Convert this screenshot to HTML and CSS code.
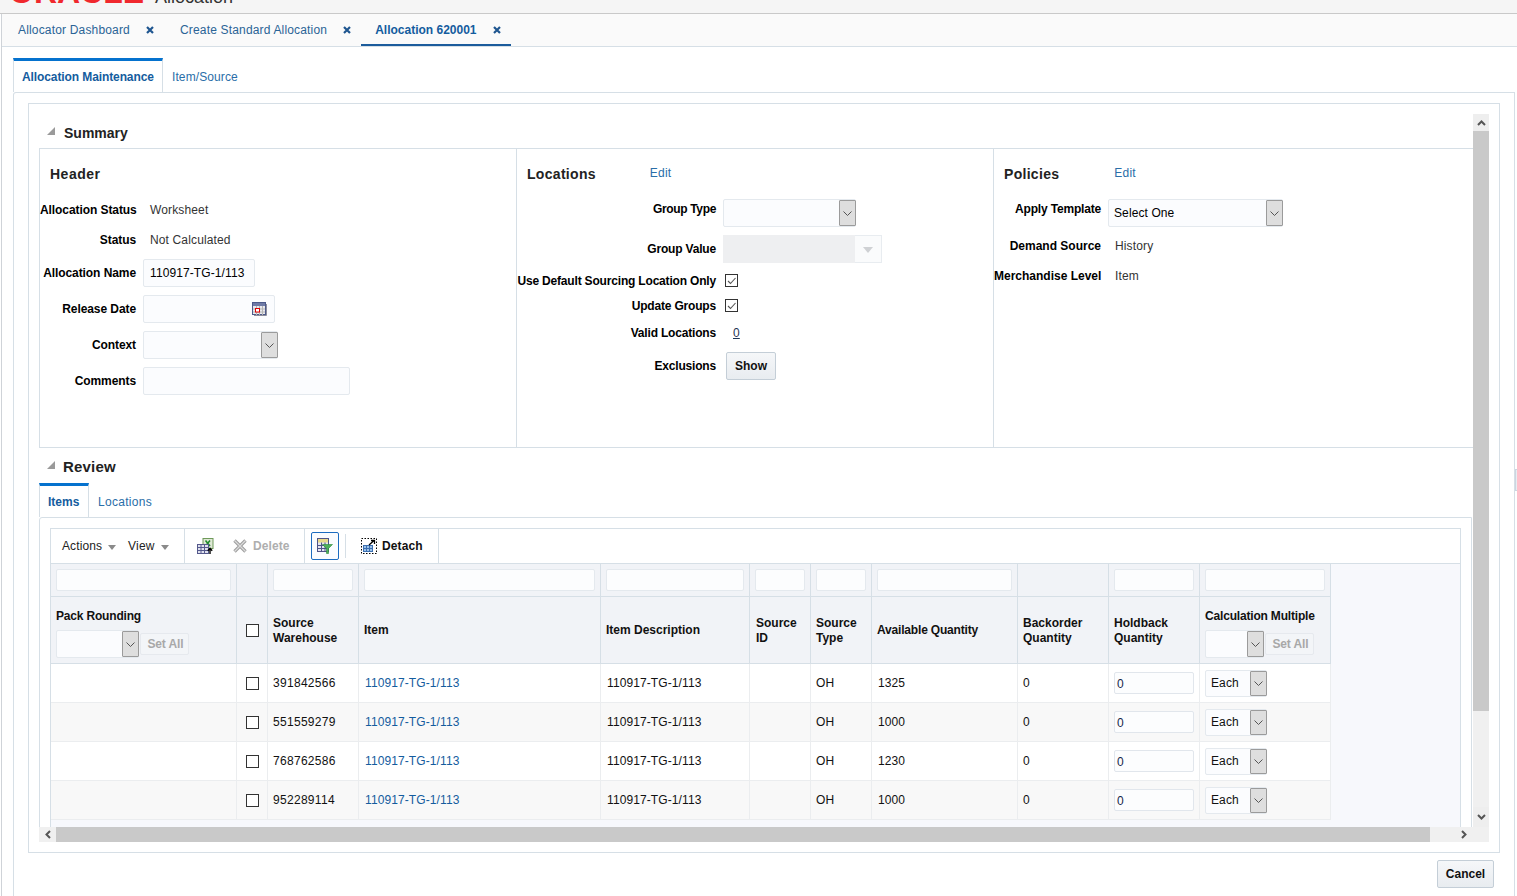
FILE: index.html
```html
<!DOCTYPE html>
<html lang="en">
<head>
<meta charset="utf-8">
<title>Allocation 620001</title>
<link rel="stylesheet" href="styles.css">
</head>
<body>
<svg class="defs" width="0" height="0" aria-hidden="true">
  <defs>
    <symbol id="chev" viewBox="0 0 9 5"><polyline points="0.5,0.5 4.5,4.5 8.5,0.5" fill="none" stroke="#555" stroke-width="1"/></symbol>
    <symbol id="close" viewBox="0 0 8 8"><path d="M1 1L7 7M7 1L1 7" stroke="#1f5690" stroke-width="2.2" fill="none"/></symbol>
    <symbol id="collapse" viewBox="0 0 8 8"><polygon points="0,8 8,8 8,0" fill="#9a9a9a"/></symbol>
    <symbol id="check" viewBox="0 0 14 14"><rect x="0.5" y="0.5" width="12" height="12" fill="#fff" stroke="#333"/><polyline points="3,7 5.5,9.5 10.5,4" fill="none" stroke="#555" stroke-width="1.1"/></symbol>
  </defs>
</svg>

<div class="topbar">
  <span class="logo">ORACLE</span>
  <span class="app-name">Allocation</span>
</div>

<div class="shell">
  <nav class="tabbar">
    <div class="doc-tab"><span>Allocator Dashboard</span><svg class="x"><use href="#close"/></svg></div>
    <div class="doc-tab"><span>Create Standard Allocation</span><svg class="x"><use href="#close"/></svg></div>
    <div class="doc-tab doc-tab-on"><span>Allocation 620001</span><svg class="x"><use href="#close"/></svg></div>
  </nav>

  <div class="page">
    <div class="tabs">
      <div class="tab tab-on tab-main">Allocation Maintenance</div>
      <div class="tab">Item/Source</div>
    </div>

    <div class="panel">
      <div class="inner">
        <div class="frame">
          <div class="viewport">
            <div class="sec-head sec-summary">
              <svg class="tri"><use href="#collapse"/></svg><h2>Summary</h2>
            </div>

            <div class="summary">
              <section class="col col-header">
                <div class="col-head"><h3>Header</h3></div>
                <div class="row"><label>Allocation Status</label><span class="val">Worksheet</span></div>
                <div class="row"><label>Status</label><span class="val">Not Calculated</span></div>
                <div class="row row-f"><label>Allocation Name</label><div class="inp inp-name">110917-TG-1/113</div></div>
                <div class="row row-f"><label>Release Date</label>
                  <div class="inp inp-date">
                    <svg class="cal" viewBox="0 0 15 14" width="15" height="14">
                      <rect x="0.5" y="0.5" width="13" height="12" fill="#e9e9ee" stroke="#4d5a8a"/>
                      <rect x="1" y="1" width="12" height="3" fill="#6f7ba6"/>
                      <path d="M1 7H13M1 10H13M4.5 4V13M7.5 4V13M10.5 4V13" stroke="#b5b5b5" stroke-width="1"/>
                      <rect x="3.5" y="6.5" width="4" height="3.5" fill="#fff" stroke="#e00000"/>
                      <path d="M14.5 2V13.5H2" stroke="#8d8d9c" fill="none"/>
                    </svg>
                  </div>
                </div>
                <div class="row row-f"><label>Context</label>
                  <div class="select sel-context"><span class="sel-text"></span><span class="sel-btn"><svg class="chev"><use href="#chev"/></svg></span></div>
                </div>
                <div class="row row-f"><label>Comments</label><div class="inp inp-comments"></div></div>
              </section>

              <section class="col col-loc">
                <div class="col-head"><h3>Locations</h3><a class="edit">Edit</a></div>
                <div class="row row-f"><label class="up">Group Type</label>
                  <div class="select sel-group"><span class="sel-text"></span><span class="sel-btn"><svg class="chev"><use href="#chev"/></svg></span></div>
                </div>
                <div class="row row-f"><label>Group Value</label>
                  <div class="select-off"><span class="off-text"></span><span class="off-btn"></span></div>
                </div>
                <div class="row row-a"><label>Use Default Sourcing Location Only</label><svg class="cb cb-on"><use href="#check"/></svg></div>
                <div class="row row-b"><label>Update Groups</label><svg class="cb cb-on"><use href="#check"/></svg></div>
                <div class="row row-c"><label>Valid Locations</label><a class="zero">0</a></div>
                <div class="row row-d"><label>Exclusions</label><button class="btn btn-show">Show</button></div>
              </section>

              <section class="col col-pol">
                <div class="col-head"><h3>Policies</h3><a class="edit">Edit</a></div>
                <div class="row row-f"><label class="up">Apply Template</label>
                  <div class="select sel-template"><span class="sel-text">Select One</span><span class="sel-btn"><svg class="chev"><use href="#chev"/></svg></span></div>
                </div>
                <div class="row"><label>Demand Source</label><span class="val">History</span></div>
                <div class="row"><label>Merchandise Level</label><span class="val">Item</span></div>
              </section>
            </div>

            <div class="sec-head sec-review">
              <svg class="tri"><use href="#collapse"/></svg><h2 class="h-review">Review</h2>
            </div>

            <div class="tabs">
              <div class="tab tab-on tab-items">Items</div>
              <div class="tab tab-loc">Locations</div>
            </div>

            <div class="review-panel">
              <div class="table-box">
                <div class="toolbar">
                  <div class="tb-group tb-menus">
                    <span>Actions</span><i class="caret"></i>
                    <span class="tb-view">View</span><i class="caret"></i>
                  </div>
                  <div class="tb-group tb-actions">
                    <svg class="ic" viewBox="0 0 17 17" width="17" height="17">
                      <rect x="6" y="0.5" width="10" height="10" fill="#dfe8d6" stroke="#6f9a5a"/>
                      <path d="M8.5 2.5L13 8M13 2.5L8.5 8" stroke="#1f8a2c" stroke-width="1.6"/>
                      <rect x="0.5" y="6.5" width="11" height="9" fill="#dfe1ee" stroke="#55598c"/>
                      <path d="M0.5 9.5H11M0.5 12.5H11M4 6.5V15M7.5 6.5V15" stroke="#55598c" stroke-width="1"/>
                      <path d="M13 16V11M10.8 12.8L13 10.4L15.2 12.8" stroke="#000" stroke-width="1.4" fill="none"/>
                    </svg>
                    <span class="tb-del">
                      <svg class="ic" viewBox="0 0 14 14" width="14" height="14"><path d="M1.5 1.5L12.5 12.5M12.5 1.5L1.5 12.5" stroke="#a0a0a0" stroke-width="3.4"/><path d="M1.5 1.5L12.5 12.5M12.5 1.5L1.5 12.5" stroke="#dcdcdc" stroke-width="1.2"/></svg>
                      <b>Delete</b>
                    </span>
                  </div>
                  <div class="tb-group tb-filter">
                    <span class="filter-btn">
                      <svg class="ic" viewBox="0 0 16 16" width="16" height="16">
                        <rect x="0.5" y="0.5" width="11" height="13" fill="#e5e5f0" stroke="#4f5488"/>
                        <rect x="1" y="1" width="10" height="3.5" fill="#e8d98a"/>
                        <path d="M1 7.5H11M1 10.5H11M4.5 4.5V13.5M8 4.5V13.5" stroke="#4f5488" stroke-width="1"/>
                        <polygon points="5.5,6.5 15.5,6.5 11.5,10.5 11.5,15.5 9.5,15.5 9.5,10.5" fill="#4fb05a" stroke="#2b8a3a" stroke-width="0.6"/>
                      </svg>
                    </span>
                  </div>
                  <div class="tb-group tb-detach">
                    <svg class="ic" viewBox="0 0 16 16" width="16" height="16">
                      <rect x="0.5" y="0.5" width="15" height="15" fill="#fff" stroke="#000" stroke-dasharray="1.5 1.5"/>
                      <rect x="2.5" y="7.5" width="9" height="6" fill="#9cc2ea" stroke="#3c6fb0"/>
                      <path d="M2.5 10.5H11.5M5.5 7.5V13.5M8.5 7.5V13.5" stroke="#3c6fb0" stroke-width="1"/>
                      <path d="M8 7L13 2.5M10 2.5H13.5V6" stroke="#000" stroke-width="1.3" fill="none"/>
                    </svg>
                    <b>Detach</b>
                  </div>
                </div>

                <table class="grid">
                  <colgroup>
                    <col class="c1"><col class="c2"><col class="c3"><col class="c4"><col class="c5"><col class="c6"><col class="c7"><col class="c8"><col class="c9"><col class="c10"><col class="c11">
                  </colgroup>
                  <thead>
                    <tr class="filter-row">
                      <th><div class="qbe"></div></th>
                      <th></th>
                      <th><div class="qbe"></div></th>
                      <th><div class="qbe"></div></th>
                      <th><div class="qbe"></div></th>
                      <th><div class="qbe"></div></th>
                      <th><div class="qbe"></div></th>
                      <th><div class="qbe"></div></th>
                      <th></th>
                      <th><div class="qbe"></div></th>
                      <th><div class="qbe"></div></th>
                    </tr>
                    <tr class="head-row">
                      <th>
                        <div class="th-title">Pack Rounding</div>
                        <div class="th-tools">
                          <div class="select sel-pack"><span class="sel-text"></span><span class="sel-btn"><svg class="chev"><use href="#chev"/></svg></span></div>
                          <span class="setall">Set All</span>
                        </div>
                      </th>
                      <th class="cb-cell"><span class="box"></span></th>
                      <th class="two">Source<br>Warehouse</th>
                      <th>Item</th>
                      <th>Item Description</th>
                      <th class="two th-id">Source<br>ID</th>
                      <th class="two">Source<br>Type</th>
                      <th class="tight">Available Quantity</th>
                      <th class="two">Backorder<br>Quantity</th>
                      <th class="two">Holdback<br>Quantity</th>
                      <th>
                        <div class="th-title">Calculation Multiple</div>
                        <div class="th-tools">
                          <div class="select sel-calc"><span class="sel-text"></span><span class="sel-btn"><svg class="chev"><use href="#chev"/></svg></span></div>
                          <span class="setall">Set All</span>
                        </div>
                      </th>
                    </tr>
                  </thead>
                  <tbody>
                    <tr>
                      <td></td><td class="cb-cell"><span class="box"></span></td><td>391842566</td><td><a class="link">110917-TG-1/113</a></td><td>110917-TG-1/113</td><td></td><td>OH</td><td>1325</td><td>0</td>
                      <td><div class="qty">0</div></td>
                      <td><div class="select sel-each"><span class="sel-text">Each</span><span class="sel-btn"><svg class="chev"><use href="#chev"/></svg></span></div></td>
                    </tr>
                    <tr class="alt">
                      <td></td><td class="cb-cell"><span class="box"></span></td><td>551559279</td><td><a class="link">110917-TG-1/113</a></td><td>110917-TG-1/113</td><td></td><td>OH</td><td>1000</td><td>0</td>
                      <td><div class="qty">0</div></td>
                      <td><div class="select sel-each"><span class="sel-text">Each</span><span class="sel-btn"><svg class="chev"><use href="#chev"/></svg></span></div></td>
                    </tr>
                    <tr>
                      <td></td><td class="cb-cell"><span class="box"></span></td><td>768762586</td><td><a class="link">110917-TG-1/113</a></td><td>110917-TG-1/113</td><td></td><td>OH</td><td>1230</td><td>0</td>
                      <td><div class="qty">0</div></td>
                      <td><div class="select sel-each"><span class="sel-text">Each</span><span class="sel-btn"><svg class="chev"><use href="#chev"/></svg></span></div></td>
                    </tr>
                    <tr class="alt">
                      <td></td><td class="cb-cell"><span class="box"></span></td><td>952289114</td><td><a class="link">110917-TG-1/113</a></td><td>110917-TG-1/113</td><td></td><td>OH</td><td>1000</td><td>0</td>
                      <td><div class="qty">0</div></td>
                      <td><div class="select sel-each"><span class="sel-text">Each</span><span class="sel-btn"><svg class="chev"><use href="#chev"/></svg></span></div></td>
                    </tr>
                  </tbody>
                </table>
              </div>
            </div>
          </div>

          <div class="vbar">
            <span class="sb-end"><svg viewBox="0 0 9 6" width="9" height="6"><polyline points="1,5 4.5,1.5 8,5" fill="none" stroke="#555" stroke-width="2"/></svg></span>
            <span class="v-thumb"></span>
            <span class="v-track"></span>
            <span class="sb-end sb-down"><svg viewBox="0 0 9 6" width="9" height="6"><polyline points="1,1 4.5,4.5 8,1" fill="none" stroke="#555" stroke-width="2"/></svg></span>
          </div>

          <div class="hbar">
            <span class="sb-left"><svg viewBox="0 0 6 9" width="6" height="9"><polyline points="5,1 1.5,4.5 5,8" fill="none" stroke="#555" stroke-width="2"/></svg></span>
            <span class="h-thumb"></span>
            <span class="h-track"><svg viewBox="0 0 6 9" width="6" height="9"><polyline points="1,1 4.5,4.5 1,8" fill="none" stroke="#555" stroke-width="2"/></svg></span>
          </div>
          <div class="corner"></div>
        </div>
      </div>

      <div class="footer"><button class="btn btn-cancel">Cancel</button></div>
    </div>
  </div>
</div>
<div class="splitter"></div>
</body>
</html>
```

FILE: styles.css
```css
* { box-sizing: border-box; }
html, body { margin: 0; height: 896px; overflow: hidden; background: #fff; }
body { position: relative; font: 12px/1.2 "Liberation Sans", Arial, sans-serif; color: #000; letter-spacing: .1px; }
.defs { display: block; height: 0; }
h2, h3 { margin: 0; color: #222; font-weight: bold; letter-spacing: 0; }
a { text-decoration: none; }

/* top bar: only the bottom of the brand line is visible */
.topbar { height: 14px; background: #f5f5f5; border-bottom: 1px solid #c9c9c9; overflow: hidden; display: flex; align-items: flex-end; padding-left: 9px; }
.logo { font: bold 32px/30px "Liberation Sans", Arial, sans-serif; color: #f0282d; flex: none; width: 146px; margin-bottom: 6px; letter-spacing: 0; }
.app-name { font: 18px/24px "Liberation Sans", Arial, sans-serif; color: #333; flex: none; margin-bottom: 4px; letter-spacing: 0; }

.shell { margin-left: 1px; border-left: 1px solid #cfd3d8; height: 882px; }

/* document tabs */
.tabbar { height: 33px; background: #fafafa; border-bottom: 1px solid #d6dfe6; display: flex; padding-left: 2px; }
.doc-tab { height: 32px; padding: 0 12px 0 14px; display: flex; align-items: center; gap: 16px; color: #2a6496; letter-spacing: .17px; }
.doc-tab .x { width: 8px; height: 8px; flex: none; }
.doc-tab-on { margin-left: -2px; border-bottom: 2px solid #1c5c9c; font-weight: bold; color: #145c9e; padding-right: 10px; padding-top: 2px; letter-spacing: 0; }

.page { padding: 11px 2px 0 11px; }

/* tabs */
.tabs { display: flex; height: 34px; }
.tab { padding: 3px 9px 0 9px; line-height: 32px; color: #2a6ea8; white-space: nowrap; }
.tab-loc { letter-spacing: .3px; }
.tab-on { border: 1px solid #d6dfe6; border-width: 3px 1px 0 1px; border-top-color: #0572ce; padding: 0 8px; font-weight: bold; color: #145c9e; letter-spacing: -.1px; }
.tab-main { width: 150px; }
.tab-items { width: 50px; letter-spacing: 0; }

.panel { border: 1px solid #d6dfe6; border-bottom: 0; border-top-left-radius: 3px; height: 804px; padding: 10px 14px 0; }
.inner { border: 1px solid #d6dfe6; height: 750px; padding: 10px; background: #fff; }
.frame { display: grid; grid-template-columns: 1fr 16px; grid-template-rows: 1fr 15px; height: 100%; }

.viewport { overflow: hidden; min-width: 0; min-height: 0; }

/* scrollbars */
.vbar { display: flex; flex-direction: column; background: #f0f0f0; }
.sb-end { height: 17px; background: #eee; display: flex; align-items: center; justify-content: center; flex: none; }
.sb-down { height: 20px; }
.v-thumb { height: 580px; background: #c9c9c9; flex: none; }
.v-track { flex: 1; }
.hbar { display: flex; background: #f0f0f0; }
.sb-left { width: 17px; display: flex; align-items: center; justify-content: center; flex: none; }
.h-thumb { width: 1374px; background: #c9c9c9; flex: none; }
.h-track { flex: 1; display: flex; align-items: center; justify-content: flex-end; padding-right: 6px; }
.corner { background: #f0f0f0; }

/* section headings */
.sec-head { display: flex; align-items: center; padding-left: 8px; }
.sec-summary { height: 34px; padding-top: 4px; }
.sec-review { height: 35px; padding-top: 3px; }
.tri { width: 8px; height: 8px; flex: none; margin-right: 9px; margin-top: -5px; }
.sec-head h2 { font-size: 14px; line-height: 18px; }
.sec-head .h-review { font-size: 15px; letter-spacing: .2px; margin-left: -1px; }

/* summary */
.summary { display: grid; grid-template-columns: 477px 477px 480px; height: 300px; border: 1px solid #d6dfe6; border-width: 1px 0 1px 1px; }
.col { display: flex; flex-direction: column; gap: 8px; }
.col + .col { border-left: 1px solid #d6dfe6; margin-left: -1px; }
.col-head { height: 42px; display: flex; align-items: flex-start; padding-left: 10px; }
.col-head h3 { font-size: 14px; line-height: 50px; letter-spacing: .3px; height: 42px; }
.col-header h3 { letter-spacing: .5px; }
.edit { color: #2a6ea8; line-height: 49px; letter-spacing: .2px; }
.col-loc .edit { margin-left: 54px; }
.col-pol .edit { margin-left: 55px; }

.row { display: flex; align-items: center; height: 22px; flex: none; }
.row-f { height: 28px; }
.row label { font-weight: bold; text-align: right; flex: none; margin-right: 7px; white-space: nowrap; letter-spacing: -.18px; }
.col-header label { width: 96px; letter-spacing: -.08px; }
.col-loc label { width: 199px; }
.col-pol label { width: 107px; letter-spacing: 0; }
.col-loc label.up { letter-spacing: -.35px; }
.col-pol label.up { letter-spacing: -.18px; }
.row label.up { padding-bottom: 8px; }
.val { margin-left: 7px; color: #333; letter-spacing: .14px; }

.row-a { height: 20px; }
.row-b { height: 20px; margin-top: -3px; }
.row-c { height: 20px; margin-top: -1px; }
.row-d { height: 28px; margin-top: 1px; }

.inp { height: 28px; background: #fbfcfe; border: 1px solid #e4e9ee; border-radius: 2px; display: flex; align-items: center; padding-left: 6px; }
.inp-name { width: 112px; }
.inp-date { width: 132px; justify-content: flex-end; padding-right: 7px; }
.inp-comments { width: 207px; }
.cal { display: block; }

.select { display: flex; height: 28px; background: #fbfcfe; border: 1px solid #e4e9ee; border-radius: 2px; flex: none; }
.sel-text { flex: 1; padding: 1px 0 0 5px; display: flex; align-items: center; min-width: 0; }
.sel-btn { width: 17px; margin: 0 -1px 0 0; background: #dedede; border: 1px solid #9b9b9b; border-radius: 1px; display: flex; align-items: center; justify-content: center; flex: none; }
.chev { width: 9px; height: 5px; display: block; }
.sel-context { width: 135px; }
.sel-group { width: 133px; }
.sel-template { width: 175px; }

.select-off { display: flex; width: 159px; height: 28px; }
.off-text { width: 132px; background: #eeeff1; }
.off-btn { flex: 1; border: 1px solid #e8ecf0; border-left: 0; position: relative; background: #fafbfc; }
.off-btn::after { content: ""; position: absolute; left: 8px; top: 11px; border: 5px solid transparent; border-top: 6px solid #cfd1d4; border-bottom: 0; }

.cb { width: 14px; height: 14px; flex: none; margin-left: 2px; }
.zero { margin-left: 10px; color: #1f3554; text-decoration: underline; }

.btn { font: bold 12px "Liberation Sans", Arial, sans-serif; color: #111; background: linear-gradient(#f5f7f9, #e8ecf0); border: 1px solid #c4ced7; border-radius: 2px; padding: 0; }
.btn-show { width: 50px; height: 28px; margin-left: 3px; }
.btn-cancel { width: 57px; height: 28px; }

/* review */
.review-panel { border: 1px solid #d6dfe6; border-top-left-radius: 3px; height: 400px; padding: 10px 10px 0; width: 1433px; }
.table-box { border: 1px solid #d6dfe6; border-width: 0 1px; height: 100%; background: #f7f8fc; width: 1411px; }

.toolbar { height: 36px; background: #fff; border: 1px solid #d6dfe6; border-width: 1px 0; display: flex; align-items: stretch; }
.tb-group { display: flex; align-items: center; border-right: 1px solid #d6dfe6; }
.tb-menus { width: 134px; padding-left: 11px; color: #222; }
.caret { width: 0; height: 0; border: 4.5px solid transparent; border-top: 5px solid #8a8a8a; border-bottom: 0; margin-left: 6px; margin-top: 2px; }
.tb-view { margin-left: 12px; letter-spacing: .2px; }
.tb-actions { width: 120px; padding-left: 12px; }
.tb-del { display: flex; align-items: center; gap: 6px; margin-left: 19px; color: #aeaeae; }
.tb-filter { width: 41px; padding-left: 6px; border-right: 0; position: relative; }
.tb-filter::after { content: ""; position: absolute; right: 0; top: 5px; bottom: 5px; width: 1px; background: #d6dfe6; }
.filter-btn { width: 28px; height: 28px; border: 1px solid #1c6cc0; border-radius: 2px; display: flex; align-items: center; justify-content: center; background: #fafcff; }
.tb-detach { width: 93px; padding-left: 15px; gap: 5px; color: #111; }
.ic { display: block; flex: none; }

/* grid */
.grid { table-layout: fixed; width: 1280px; border-collapse: separate; border-spacing: 0; }
.c1 { width: 186px; } .c2 { width: 31px; } .c3 { width: 91px; } .c4 { width: 242px; } .c5 { width: 149px; } .c6 { width: 61px; }
.c7 { width: 61px; } .c8 { width: 146px; } .c9 { width: 91px; } .c10 { width: 91px; } .c11 { width: 131px; }
.grid th { background: #f1f3f7; border-right: 1px solid #d6dfe6; border-bottom: 1px solid #d6dfe6; padding: 0 5px; text-align: left; font-weight: bold; line-height: 15px; color: #111; letter-spacing: 0; }
.filter-row th { height: 33px; }
.head-row th { height: 67px; }
.grid .two { padding-top: 2px; }
.grid .th-id { padding-left: 6px; }
.grid .tight { letter-spacing: -.18px; }
.qbe { height: 22px; background: #fcfdfe; border: 1px solid #e4e9ee; border-radius: 2px; margin-top: -1px; }
.th-title { margin-top: 7px; margin-bottom: 6px; white-space: nowrap; letter-spacing: -.18px; }
.th-tools { display: flex; align-items: center; gap: 1px; }
.sel-pack { width: 83px; }
.sel-calc { width: 59px; }
.setall { width: 49px; height: 22px; line-height: 20px; text-align: center; border: 1px solid #e6e9ee; border-radius: 2px; background: #f3f5f8; color: #a8a8a8; font-weight: bold; letter-spacing: -.1px; padding-left: 2px; }
.grid .cb-cell { text-align: center; padding: 0; }
.box { display: inline-block; width: 13px; height: 13px; background: #fff; border: 1px solid #333; vertical-align: middle; margin-left: 1px; }

.grid td { height: 39px; background: #fff; border-right: 1px solid #ebedef; border-bottom: 1px solid #ebedef; padding: 0 5px; color: #111; }
.grid td:nth-child(3) { letter-spacing: .3px; }
.grid td:nth-child(4), .grid td:nth-child(5), .grid td:nth-child(8) { padding-left: 6px; }
.grid .alt td { background: #f8f8f8; }
.link { color: #145c9e; }
.qty { width: 80px; height: 22px; background: #fcfdfe; border: 1px solid #e1e6ec; border-radius: 2px; padding: 2px 0 0 2px; line-height: 18px; color: #16284a; }
.sel-each { width: 62px; height: 27px; }

.footer { display: flex; justify-content: flex-end; padding: 7px 6px 0 0; }

.splitter { position: absolute; right: 0; top: 469px; width: 2px; height: 22px; background: #e8edf2; border: 1px solid #ccd6e0; border-right: 0; }
```
